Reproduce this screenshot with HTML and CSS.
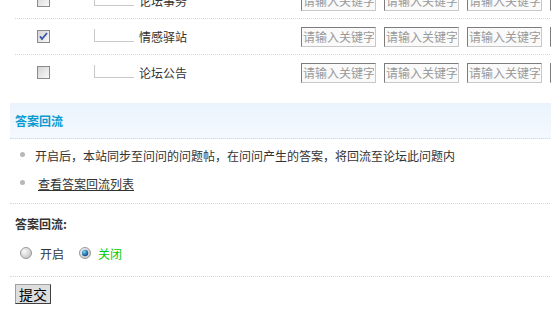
FILE: index.html
```html
<!DOCTYPE html>
<html lang="zh-CN">
<head>
<meta charset="utf-8">
<title>答案回流</title>
<link rel="stylesheet" href="styles.css">
</head>
<body>
<div class="page">
  <div class="forums">
    <div class="frow">
      <span class="cb"><svg width="13" height="13" viewBox="0 0 13 13"><defs><linearGradient id="g1" x1="0" y1="0" x2="1" y2="1"><stop offset="0" stop-color="#d2d2d2"/><stop offset="1" stop-color="#fbfbfb"/></linearGradient></defs><rect x="0.5" y="0.5" width="12" height="12" fill="url(#g1)" stroke="#8a8a8a"/></svg></span>
      <div class="fname"><span class="tree"></span><span class="ftitle">论坛事务</span></div>
      <input class="kw" type="text" placeholder="请输入关键字">
      <input class="kw" type="text" placeholder="请输入关键字">
      <input class="kw" type="text" placeholder="请输入关键字">
      <input class="kw" type="text" placeholder="请输入关键字">
    </div>
    <div class="frow">
      <span class="cb"><svg width="13" height="13" viewBox="0 0 13 13"><defs><linearGradient id="g2" x1="0" y1="0" x2="1" y2="1"><stop offset="0" stop-color="#d2d2d2"/><stop offset="1" stop-color="#fbfbfb"/></linearGradient></defs><rect x="0.5" y="0.5" width="12" height="12" fill="url(#g2)" stroke="#8a8a8a"/><path d="M3 6.2 L5 9 L10 3" fill="none" stroke="#3a56a8" stroke-width="1.8"/></svg></span>
      <div class="fname"><span class="tree"></span><span class="ftitle">情感驿站</span></div>
      <input class="kw" type="text" placeholder="请输入关键字">
      <input class="kw" type="text" placeholder="请输入关键字">
      <input class="kw" type="text" placeholder="请输入关键字">
      <input class="kw" type="text" placeholder="请输入关键字">
    </div>
    <div class="frow">
      <span class="cb"><svg width="13" height="13" viewBox="0 0 13 13"><defs><linearGradient id="g3" x1="0" y1="0" x2="1" y2="1"><stop offset="0" stop-color="#d2d2d2"/><stop offset="1" stop-color="#fbfbfb"/></linearGradient></defs><rect x="0.5" y="0.5" width="12" height="12" fill="url(#g3)" stroke="#8a8a8a"/></svg></span>
      <div class="fname"><span class="tree"></span><span class="ftitle">论坛公告</span></div>
      <input class="kw" type="text" placeholder="请输入关键字">
      <input class="kw" type="text" placeholder="请输入关键字">
      <input class="kw" type="text" placeholder="请输入关键字">
      <input class="kw" type="text" placeholder="请输入关键字">
    </div>
  </div>

  <div class="sec-head">答案回流</div>

  <ul class="tips">
    <li>开启后，本站同步至问问的问题帖，在问问产生的答案，将回流至论坛此问题内</li>
    <li><a class="tlink" href="#">查看答案回流列表</a></li>
  </ul>

  <div class="field">
    <div class="flabel">答案回流:</div>
    <div class="radios">
      <label class="ropt">
        <svg width="12" height="12" viewBox="0 0 12 12"><defs><radialGradient id="r1" cx="0.35" cy="0.35" r="0.7"><stop offset="0" stop-color="#fafafa"/><stop offset="1" stop-color="#c4c4c4"/></radialGradient></defs><circle cx="6" cy="6" r="5.5" fill="url(#r1)" stroke="#9a9a9a"/></svg>
        <span>开启</span>
      </label>
      <label class="ropt on">
        <svg width="12" height="12" viewBox="0 0 12 12"><defs><radialGradient id="r2" cx="0.35" cy="0.35" r="0.7"><stop offset="0" stop-color="#fafafa"/><stop offset="1" stop-color="#c4c4c4"/></radialGradient><radialGradient id="r3" cx="0.35" cy="0.3" r="0.7"><stop offset="0" stop-color="#7fd0f5"/><stop offset="1" stop-color="#0a4f8c"/></radialGradient></defs><circle cx="6" cy="6" r="5.5" fill="url(#r2)" stroke="#9a9a9a"/><circle cx="6" cy="6" r="3.2" fill="url(#r3)"/></svg>
        <span>关闭</span>
      </label>
    </div>
  </div>

  <div class="actions"><button class="btn" type="button">提交</button></div>
</div>
</body>
</html>
```

FILE: styles.css
```css
html, body {
  margin: 0;
  padding: 0;
  background: #fff;
  overflow: hidden;
}
body {
  font-family: "Noto Sans CJK SC", "Liberation Sans", sans-serif;
  font-size: 12px;
  color: #333;
}
.page {
  margin-top: -17px;
  padding-left: 10px;
  width: 620px;
}
.forums {
  margin-left: 5px;
}
.frow {
  display: flex;
  align-items: center;
  height: 35px;
  padding-left: 22px;
  border-bottom: 1px dotted #bfdcf2;
  white-space: nowrap;
}
.frow:last-child {
  border-bottom: none;
}
.cb {
  display: block;
  width: 13px;
  height: 13px;
}
.cb svg {
  display: block;
}
.fname {
  display: flex;
  align-items: center;
  width: 207px;
  margin-left: 44px;
  flex: none;
}
.tree {
  display: block;
  width: 39px;
  height: 12px;
  border-left: 1px solid #c8c8c8;
  border-bottom: 1px solid #c8c8c8;
  margin-top: -2px;
  margin-right: 5px;
}
.ftitle {
  line-height: 16px;
}
.kw {
  box-sizing: border-box;
  width: 75px;
  height: 20px;
  margin: 0 8px 0 0;
  padding: 0 1px;
  flex: none;
  border: 1px solid;
  border-color: #7c7c7c #c8c8c8 #c8c8c8 #7c7c7c;
  background: #fafafa;
  font-family: "Noto Sans CJK SC", sans-serif;
  font-size: 12px;
  color: #999;
  outline: none;
}
.kw::placeholder {
  color: #999;
  opacity: 1;
}
.sec-head {
  margin-top: 13px;
  height: 35px;
  line-height: 35px;
  padding-left: 5px;
  background: linear-gradient(#eaf3fd, #f5f9fe);
  border-bottom: 1px dotted #bfdcf2;
  color: #0a9ad0;
  font-weight: bold;
}
.tips {
  list-style: none;
  margin: 0;
  padding: 2px 0 6px;
  border-bottom: 1px dotted #bfdcf2;
}
.tips li {
  display: flex;
  align-items: center;
  height: 28px;
}
.tips li::before {
  content: "";
  display: block;
  width: 5px;
  height: 5px;
  border-radius: 50%;
  background: #b8b8b8;
  margin: -2px 10px 0 10px;
}
.tlink {
  color: #333;
  text-decoration: underline;
  margin-left: 3px;
}
.field {
  padding: 12px 0 13px 5px;
  border-bottom: 1px dotted #bfdcf2;
}
.flabel {
  font-weight: bold;
  line-height: 16px;
  color: #333;
}
.radios {
  display: flex;
  align-items: center;
  height: 20px;
  margin-top: 11px;
  padding-left: 5px;
}
.ropt {
  display: flex;
  align-items: center;
  gap: 8px;
  margin-right: 15px;
}
.ropt svg {
  display: block;
}
.ropt.on {
  gap: 7px;
}
.ropt.on span {
  color: #00cc00;
}
.actions {
  padding: 7px 0 0 5px;
}
.btn {
  box-sizing: border-box;
  height: 20px;
  width: 36px;
  padding: 0;
  border: 1px solid;
  border-color: #a0a0a0 #404040 #404040 #a0a0a0;
  background: #dedede;
  font-family: "Noto Sans CJK SC", sans-serif;
  font-size: 14px;
  line-height: 16px;
  color: #000;
}
```
